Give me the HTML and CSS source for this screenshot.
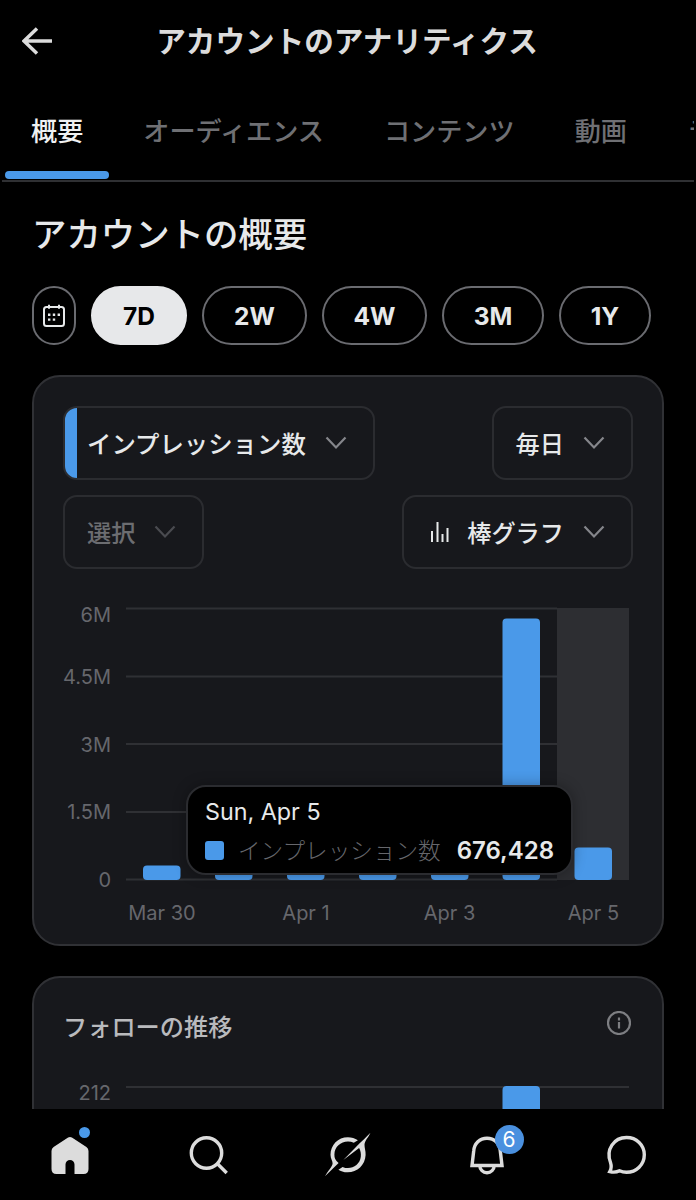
FILE: index.html
```html
<!DOCTYPE html>
<html lang="ja">
<head>
  <meta charset="UTF-8">
  <meta name="viewport" content="width=device-width, initial-scale=1.0">
  <title>アカウントのアナリティクス</title>
  <link rel="stylesheet" href="styles.css">
</head>
<body>
  <header class="header">
    <svg class="back" viewBox="0 0 32 28" width="32" height="28"><path d="M30 14H2M15 1.5 2 14l13 12.5"/></svg>
    <h1>アカウントのアナリティクス</h1>
  </header>

  <nav class="tabs">
    <a class="tab active">概要</a>
    <a class="tab">オーディエンス</a>
    <a class="tab">コンテンツ</a>
    <a class="tab">動画</a>
    <a class="tab">ライブ</a>
  </nav>

  <main>
    <h2>アカウントの概要</h2>

    <div class="ranges">
      <button class="range calendar">
        <svg viewBox="0 0 24 24" width="24" height="24">
          <rect x="2" y="3" width="20" height="19" rx="2.5"/>
          <path d="M7 0.8v4M17 0.8v4"/>
          <path class="dots" d="M6 9.6h2.4v2.4H6zM10.8 9.6h2.4v2.4h-2.4zM15.6 9.6H18v2.4h-2.4zM6 14.4h2.4v2.4H6zM10.8 14.4h2.4v2.4h-2.4z"/>
        </svg>
      </button>
      <button class="range w96 selected">7D</button>
      <button class="range w105">2W</button>
      <button class="range w105">4W</button>
      <button class="range w102">3M</button>
      <button class="range w92">1Y</button>
    </div>

    <section class="card overview">
      <div class="select-row">
        <div class="select metric"><span>インプレッション数</span>
          <svg class="chevron" viewBox="0 0 22 14" width="22" height="14"><path d="m1.5 1.5 9.5 10 9.5-10"/></svg>
        </div>
        <div class="select"><span>毎日</span>
          <svg class="chevron" viewBox="0 0 22 14" width="22" height="14"><path d="m1.5 1.5 9.5 10 9.5-10"/></svg>
        </div>
      </div>
      <div class="select-row">
        <div class="select disabled"><span>選択</span>
          <svg class="chevron" viewBox="0 0 22 14" width="22" height="14"><path d="m1.5 1.5 9.5 10 9.5-10"/></svg>
        </div>
        <div class="select">
          <svg class="bars-icon" viewBox="0 0 20 20" width="20" height="20"><path d="M2 9v11M7.500 0v20M12.500 12v8M17.500 6v14"/></svg>
          <span>棒グラフ</span>
          <svg class="chevron" viewBox="0 0 22 14" width="22" height="14"><path d="m1.5 1.5 9.5 10 9.5-10"/></svg>
        </div>
      </div>

      <div class="chart">
        <svg viewBox="0 0 568 340" width="568" height="340">
          <rect class="hover" x="494" y="13" width="72" height="272"/>
          <path class="grid" d="M63 13.500h431M63 81.500h431M63 149h431M63 217h431M63 284.500h431"/>
          <g class="axis y">
            <text x="48" y="26.500">6M</text>
            <text x="48" y="88.500">4.5M</text>
            <text x="48" y="156.500">3M</text>
            <text x="48" y="224">1.5M</text>
            <text x="48" y="291.500">0</text>
          </g>
          <g class="bar">
            <rect x="80" y="270.500" width="37.500" height="14.500" rx="4"/>
            <rect x="152" y="262" width="37.500" height="23" rx="4"/>
            <rect x="224" y="262" width="37.500" height="23" rx="4"/>
            <rect x="296" y="262" width="37.500" height="23" rx="4"/>
            <rect x="368" y="262" width="37.500" height="23" rx="4"/>
            <rect x="439.500" y="23.500" width="37.500" height="261.500" rx="4"/>
            <rect x="511.500" y="252.500" width="37.500" height="32.500" rx="4"/>
          </g>
          <g class="axis x">
            <text x="99" y="325">Mar 30</text>
            <text x="243" y="325">Apr 1</text>
            <text x="386.500" y="325">Apr 3</text>
            <text x="530.500" y="325">Apr 5</text>
          </g>
        </svg>
        <div class="tooltip">
          <div class="tooltip-date">Sun, Apr 5</div>
          <div class="tooltip-row">
            <span class="swatch"></span>
            <span class="tooltip-label">インプレッション数</span>
            <span class="tooltip-value">676,428</span>
          </div>
        </div>
      </div>
    </section>

    <section class="card follows">
      <div class="card-title">
        <h3>フォローの推移</h3>
        <svg viewBox="0 0 24 24" width="24" height="24"><circle cx="12" cy="12" r="11"/><path d="M12 11v6.500M12 6.500v3"/></svg>
      </div>
      <svg class="follow-chart" viewBox="0 0 568 60" width="568" height="60">
        <path class="grid" d="M63 21h503"/>
        <text class="axis y" x="48" y="33.500">212</text>
        <rect class="bar" x="439.500" y="20" width="37.500" height="60" rx="4"/>
      </svg>
    </section>
  </main>

  <nav class="bottom-nav">
    <a class="nav-item">
      <svg viewBox="0 0 48 48" width="48" height="48">
        <path class="fill" d="M22.100 6.600 7.600 16.100Q5.500 17.500 5.500 20v18q0 5 5 5h9V33.500a4.500 4.500 0 0 1 9 0V43h9q5 0 5-5V20q0-2.500-2.100-3.900L25.900 6.600q-1.900-1.300-3.800 0z"/>
      </svg>
      <span class="dot"></span>
    </a>
    <a class="nav-item">
      <svg viewBox="0 0 48 48" width="48" height="48"><circle cx="21.500" cy="22" r="15.200"/><path d="m32.200 32.500 9.500 9.500"/></svg>
    </a>
    <a class="nav-item">
      <svg viewBox="0 0 48 48" width="48" height="48">
        <path class="fill" d="M19.300 29.100 35.400 12.600C38.500 9.500 42.300 6.200 46.500 1.800c-2 4.300-5.700 8-6 12-.1 3 1.300 6.200 1.100 10.200-.4 10-8.200 17.300-18 17.300-4 0-7-1.200-9.200-2.600l4.200-2.800c7.800 3.500 17.200-1.200 18.200-10.100.4-3.200-.2-6.300-1.700-8.800z"/>
        <path class="fill" d="M33.900 9.300c-3-2-6.300-3-10-3C14 6.300 6.500 14 6.500 23.800c0 4 2.300 6.500 2.100 8.700-.3 3.200-4.400 7.200-7.600 12.700L14.600 32c-3.300-2.300-4.300-5-4.200-8.400.1-7.600 6.100-13.100 13.600-13.100 2 0 4 .4 5.800 1.200z"/>
      </svg>
    </a>
    <a class="nav-item">
      <svg viewBox="0 0 48 48" width="48" height="48">
        <path d="M9 34.500 10.700 20C11.300 12 16.700 7.300 24 7.300S36.700 12 37.300 20L39 34.500z"/>
        <path d="M16.800 34.500a7.200 7.200 0 0 0 14.400 0"/>
      </svg>
      <span class="badge">6</span>
    </a>
    <a class="nav-item">
      <svg viewBox="0 0 48 48" width="48" height="48">
        <path d="M8.500 31.500C3.500 18.500 12 6.500 24.500 6.500c10 0 17.800 7.500 17.800 17.300s-7.800 17.500-17.800 17.500c-2.500 0-4.800-.5-7-1.500-3 1.500-6.500 1.600-9.700.8 1.500-2.600 1.800-5.800.7-9.100z"/>
      </svg>
    </a>
  </nav>
</body>
</html>
```

FILE: styles.css
```css
* {
  box-sizing: border-box;
}
body {
  margin: 0;
  height: 1200px;
  display: flex;
  flex-direction: column;
  overflow: hidden;
  background: #000;
  color: #e7e9ea;
  font-family: Inter, "Noto Sans CJK JP", sans-serif;
}
h1, h2, h3 {
  margin: 0;
}
svg {
  display: block;
  flex: none;
  fill: none;
}

.header {
  height: 82px;
  flex: none;
  display: flex;
  align-items: center;
  padding: 0 22px;
}
.back {
  stroke: #dcdcdc;
  stroke-width: 3.5;
}
.header h1 {
  flex: 1;
  padding: 0 34px 3px 0;
  text-align: center;
  font-size: 29.6px;
  font-weight: 700;
  color: #dcdcdc;
}

.tabs {
  height: 100px;
  flex: none;
  display: flex;
  gap: 60px;
  margin: 0 2px;
  padding-left: 29px;
  border-bottom: 2px solid #2f3033;
  overflow: hidden;
}
.tab {
  flex: none;
  display: flex;
  flex-direction: column;
  font-size: 26.15px;
  line-height: 99px;
  font-weight: 500;
  color: #6f7074;
  white-space: nowrap;
}
.tab.active {
  color: #f0f1f2;
}
.tab.active::after {
  content: "";
  height: 8px;
  margin: -10px -26px 0;
  border-radius: 4px;
  background: #4a99e9;
}

main {
  flex: 1;
  min-height: 0;
  overflow: hidden;
  padding: 0 32px;
}
h2 {
  height: 104px;
  line-height: 105px;
  font-size: 34.4px;
  font-weight: 500;
}
.ranges {
  display: flex;
  gap: 15px;
}
.range {
  height: 59px;
  padding: 0;
  display: flex;
  align-items: center;
  justify-content: center;
  border: 2px solid #6a6b70;
  border-radius: 30px;
  background: #000;
  color: #e7e9ea;
  font-family: Inter, sans-serif;
  font-size: 24.5px;
  font-weight: 700;
}
.calendar {
  width: 44px;
}
.calendar svg {
  stroke: #e7e9ea;
  stroke-width: 2;
}
.calendar .dots {
  fill: #e7e9ea;
  stroke: none;
}
.selected {
  background: #e7e8ea;
  border-color: #e7e8ea;
  color: #000;
}
.w92 { width: 92px; }
.w96 { width: 96px; }
.w102 { width: 102px; }
.w105 { width: 105px; }

.card {
  border: 2px solid #303135;
  border-radius: 28px;
  background: #17181c;
}
.overview {
  height: 571px;
  margin-top: 30px;
  padding: 29px 29px 0 29px;
}
.select-row {
  display: flex;
  justify-content: space-between;
  margin-bottom: 15px;
}
.select {
  height: 74px;
  display: flex;
  align-items: center;
  padding: 0 26px 0 22px;
  border: 2px solid #2b2c30;
  border-radius: 14px;
  font-size: 24.2px;
  font-weight: 500;
  white-space: nowrap;
}
.select span {
  padding-bottom: 2px;
}
.metric {
  font-size: 24.4px;
  background: linear-gradient(to right, #4a99e9 12px, transparent 12px);
}
.chevron {
  margin-left: 19px;
  stroke: #85868b;
  stroke-width: 2.2;
}
.bars-icon {
  margin: 0 17px 0 4px;
  stroke: #e7e9ea;
  stroke-width: 2;
}
.disabled {
  color: #6c6d71;
}
.disabled .chevron {
  stroke: #4a4b50;
}

.chart {
  position: relative;
  margin-top: 26px;
}
.hover {
  fill: #2d2e32;
}
.grid {
  stroke: #2f3034;
  stroke-width: 2;
}
.bar {
  fill: #4a99e9;
}
.axis {
  fill: #66676c;
  font-size: 20px;
}
.axis.y {
  text-anchor: end;
}
.axis.x {
  text-anchor: middle;
}
.tooltip {
  position: absolute;
  left: 123px;
  top: 190px;
  width: 387px;
  height: 90px;
  padding: 8px 17px;
  border: 2px solid #2b2c30;
  border-radius: 20px;
  background: #000;
  box-shadow: 0 0 14px rgba(0, 0, 0, 0.3);
}
.tooltip-date {
  font-size: 23.3px;
  line-height: 34px;
}
.tooltip-row {
  display: flex;
  align-items: center;
  height: 42px;
  white-space: nowrap;
}
.swatch {
  width: 19px;
  height: 19px;
  border-radius: 3px;
  background: #4a99e9;
}
.tooltip-label {
  margin-left: 14px;
  padding-bottom: 2px;
  font-size: 22.6px;
  font-weight: 300;
  color: #66676c;
}
.tooltip-value {
  margin-left: auto;
  font-size: 24px;
  font-weight: 600;
}

.follows {
  height: 300px;
  margin-top: 30px;
  padding: 28px 31px 0 29px;
}
.card-title {
  display: flex;
  align-items: center;
  justify-content: space-between;
  height: 34px;
}
.card-title h3 {
  padding-top: 5px;
  font-size: 24.2px;
  font-weight: 500;
  color: #b9babd;
}
.card-title svg {
  stroke: #7d7e82;
  stroke-width: 2.2;
}
.follow-chart {
  margin-top: 26px;
}

.bottom-nav {
  height: 91px;
  flex: none;
  display: grid;
  grid-template-columns: repeat(5, 1fr);
  background: #000;
}
.nav-item {
  position: relative;
  display: flex;
  align-items: center;
  justify-content: center;
}
.nav-item svg {
  stroke: #dcdcdc;
  stroke-width: 3.4;
}
.nav-item .fill {
  fill: #dcdcdc;
  stroke: none;
}
.dot {
  position: absolute;
  left: 79px;
  top: 18px;
  width: 11px;
  height: 11px;
  border-radius: 50%;
  background: #4a99e9;
}
.badge {
  position: absolute;
  left: 77px;
  top: 16px;
  width: 29px;
  height: 29px;
  border-radius: 50%;
  background: #4a90df;
  color: #fff;
  font-size: 21px;
  line-height: 29px;
  text-align: center;
}
```
